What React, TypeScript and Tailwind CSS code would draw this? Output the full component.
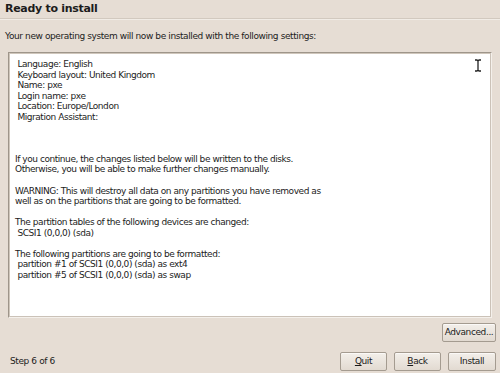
const summary = [
  ' Language: English',
  ' Keyboard layout: United Kingdom',
  ' Name: pxe',
  ' Login name: pxe',
  ' Location: Europe/London',
  ' Migration Assistant: ',
  '',
  '',
  '',
  'If you continue, the changes listed below will be written to the disks.',
  'Otherwise, you will be able to make further changes manually.',
  '',
  'WARNING: This will destroy all data on any partitions you have removed as',
  'well as on the partitions that are going to be formatted.',
  '',
  'The partition tables of the following devices are changed:',
  ' SCSI1 (0,0,0) (sda)',
  '',
  'The following partitions are going to be formatted:',
  ' partition #1 of SCSI1 (0,0,0) (sda) as ext4',
  ' partition #5 of SCSI1 (0,0,0) (sda) as swap',
]

function Button({ children, className = '' }: { children: React.ReactNode; className?: string }) {
  return (
    <button
      className={`h-[19px] rounded-[2px] border border-[#a49b90] bg-gradient-to-b from-[#f3efea] to-[#e2dad1] text-[9px] tracking-[-0.4px] text-[#1a1a1a] shadow-[inset_0_1px_0_#fbf9f7] ${className}`}
    >
      {children}
    </button>
  )
}

export default function App() {
  return (
    <div
      className="w-[500px] h-[373px] bg-[#e6ddd4] text-[#1c1c1c] flex flex-col overflow-hidden"
      style={{ fontFamily: '"DejaVu Sans", "Liberation Sans", sans-serif' }}
    >
      <div className="h-[18px] pl-[5px] pt-[1px] text-[11px] tracking-[-0.3px] font-bold leading-[16px]">Ready to install</div>
      <div className="h-px bg-[#d2c9bf]" />
      <div className="h-px bg-[#f1ece6]" />
      <div className="pl-[5px] mt-[10px] text-[9px] tracking-[-0.4px] leading-[12px]">
        Your new operating system will now be installed with the following settings:
      </div>
      <div className="relative mx-[8px] mt-[10px] h-[266px] border border-t-[#9e958a] border-l-[#9e958a] border-r-[#f4f0eb] border-b-[#f4f0eb]">
        <div className="h-full border border-t-[#cfc6bb] border-l-[#cfc6bb] border-r-[#cbc2b8] border-b-[#cbc2b8] bg-white px-[5px] pt-[5px]">
          <pre
            className="text-[9px] tracking-[-0.45px] leading-[10.55px] text-[#1c1c1c] whitespace-pre"
            style={{ fontFamily: '"DejaVu Sans", "Liberation Sans", sans-serif' }}
          >
            {summary.join('\n')}
          </pre>
        </div>
        <svg className="absolute right-[9px] top-[6px]" width="8" height="13" viewBox="0 0 8 13">
          <path d="M1 1h2l1 1 1-1h2M4 2v9M1 12h2l1-1 1 1h2" fill="none" stroke="#222" strokeWidth="1.3" />
        </svg>
      </div>
      <div className="flex justify-end pr-[4px] mt-[5px]">
        <Button className="w-[54px]">Advanced...</Button>
      </div>
      <div className="flex items-center mt-[10px] pl-[10px] pr-[4px]">
        <span className="text-[9px] tracking-[-0.4px]">Step 6 of 6</span>
        <div className="ml-auto flex gap-[7px]">
          <Button className="w-[47px]">
            <span className="underline underline-offset-1">Q</span>uit
          </Button>
          <Button className="w-[47px]">
            <span className="underline underline-offset-1">B</span>ack
          </Button>
          <Button className="w-[48px]">Install</Button>
        </div>
      </div>
    </div>
  )
}
